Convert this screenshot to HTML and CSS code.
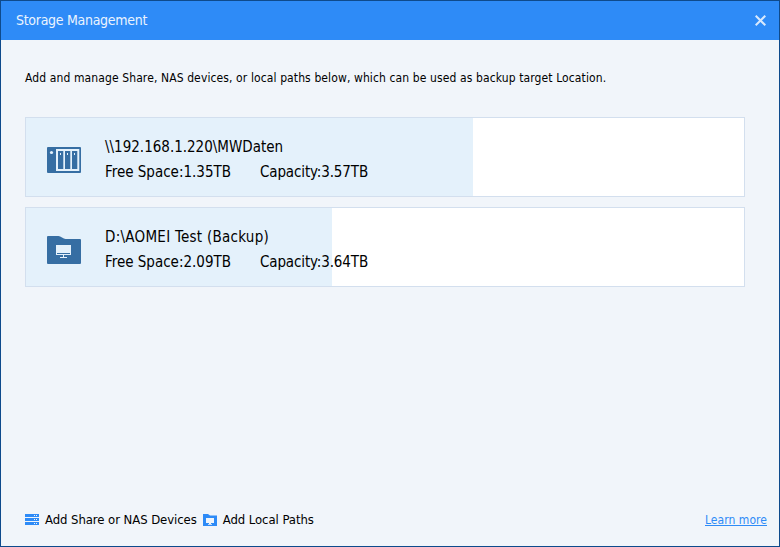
FILE: index.html
```html
<!DOCTYPE html>
<html lang="en">
<head>
<meta charset="utf-8">
<title>Storage Management</title>
<link rel="stylesheet" href="styles.css">
</head>
<body>
<div class="window">
  <header class="titlebar">
    <h1 class="title">Storage Management</h1>
    <svg class="close" width="11" height="11" viewBox="0 0 11 11"><path d="M.7.7l9.6 9.6M10.3.7L.7 10.3"/></svg>
  </header>
  <main class="content">
    <p class="intro">Add and manage Share, NAS devices, or local paths below, which can be used as backup target Location.</p>
    <div class="devices">
      <section class="device">
        <div class="usage" style="width:62.25%"></div>
        <svg class="device-icon" width="34" height="28" viewBox="0 0 34 28">
          <rect class="ink" y="1" width="34" height="26" rx="1"/>
          <path class="paper" d="M9 3h23.300v22H9z"/>
          <path class="ink" d="M11 5h5.300v18H11zM18 5h5.300v18H18zM25 5h5.300v18H25z"/>
          <path class="paper" d="M13 7h1v2h-1zM20 7h1v2h-1zM27 7h1v2h-1z"/>
          <circle class="paper" cx="4.500" cy="6.500" r="1.600"/>
        </svg>
        <div class="info">
          <div class="name">\\192.168.1.220\MWDaten</div>
          <div class="stats"><span>Free Space:1.35TB</span><span class="capacity">Capacity:3.57TB</span></div>
        </div>
      </section>
      <section class="device">
        <div class="usage" style="width:42.6%"></div>
        <svg class="device-icon" width="34" height="28" viewBox="0 0 34 28">
          <path class="ink" d="M1 0h10.500c2 0 5 3 7 3H33q1 0 1 1v23q0 1-1 1H1q-1 0-1-1V1q0-1 1-1z"/>
          <path class="paper" d="M9 9h15v10H9zM16 19h1v2h-1zM13 21h7v1h-7z"/>
          <path class="ink" d="M10 17h13v1H10z"/>
        </svg>
        <div class="info">
          <div class="name name-local">D:\AOMEI Test (Backup)</div>
          <div class="stats"><span>Free Space:2.09TB</span><span class="capacity">Capacity:3.64TB</span></div>
        </div>
      </section>
    </div>
  </main>
  <footer class="footer">
    <a class="action">
      <svg width="14" height="12" viewBox="0 0 14 12"><path class="blue" d="M0 0h14v3H0zM0 4h14v3H0zM0 8h14v3H0z"/><path class="dots" d="M9 1h1v1H9zM11 1h1v1h-1zM9 5h1v1H9zM11 5h1v1h-1zM9 9h1v1H9zM11 9h1v1h-1z"/></svg>
      <span>Add Share or NAS Devices</span>
    </a>
    <a class="action">
      <svg width="14" height="12" viewBox="0 0 14 12"><path class="blue" d="M0 0h5l2 1.500h7V12H0z"/><path class="dots" d="M3 4h8v5H3zM6 9h2v1H6zM5 10h4v.8H5z"/></svg>
      <span>Add Local Paths</span>
    </a>
    <a class="learn">Learn more</a>
  </footer>
</div>
</body>
</html>
```
FILE: styles.css
```css
* { box-sizing: border-box; margin: 0; }
body { font: 12px/16px "DejaVu Sans Condensed", "DejaVu Sans", sans-serif; font-stretch: condensed; color: #000; }
.window { display: flex; flex-direction: column; width: 780px; height: 547px; border: 1px solid #0e4a8c; background: #f1f5fa; }
.titlebar { display: flex; align-items: center; justify-content: space-between; height: 39px; padding: 0 13px 0 15px; background: #2e8bf7; }
.title { padding-bottom: 1px; font-size: 14px; font-weight: 400; letter-spacing: -.29px; color: #eaf3fe; }
.close { fill: none; stroke: #d8e9fd; stroke-width: 2; }
.content { flex: 1; padding: 30px 34px 0 24px; }
.intro { letter-spacing: .11px; white-space: nowrap; }
.devices { display: flex; flex-direction: column; gap: 10px; margin-top: 31px; }
.device { display: flex; align-items: center; position: relative; height: 80px; padding-left: 21px; border: 1px solid #d3dfee; background: #fff; }
.usage { position: absolute; inset: 0 auto 0 0; background: #e4f1fb; }
.device-icon { position: relative; margin-top: 6px; }
.ink { fill: #366ea3; }
.paper { fill: #e4f1fb; }
.info { position: relative; margin-left: 24px; padding-top: 5px; font-size: 15px; line-height: 25px; white-space: nowrap; }
.name-local { letter-spacing: .27px; }
.stats { display: flex; }
.capacity { margin-left: 29px; letter-spacing: -.13px; }
.footer { display: flex; align-items: center; height: 53px; padding: 0 12px 0 24px; }
.action { display: flex; align-items: center; gap: 6px; margin-right: 6px; font-size: 13px; letter-spacing: -.07px; white-space: nowrap; }
.blue { fill: #2e8bf7; }
.dots { fill: #f1f5fa; }
.learn { margin-left: auto; letter-spacing: .05px; color: #2e8bf7; text-decoration: underline; }
```
